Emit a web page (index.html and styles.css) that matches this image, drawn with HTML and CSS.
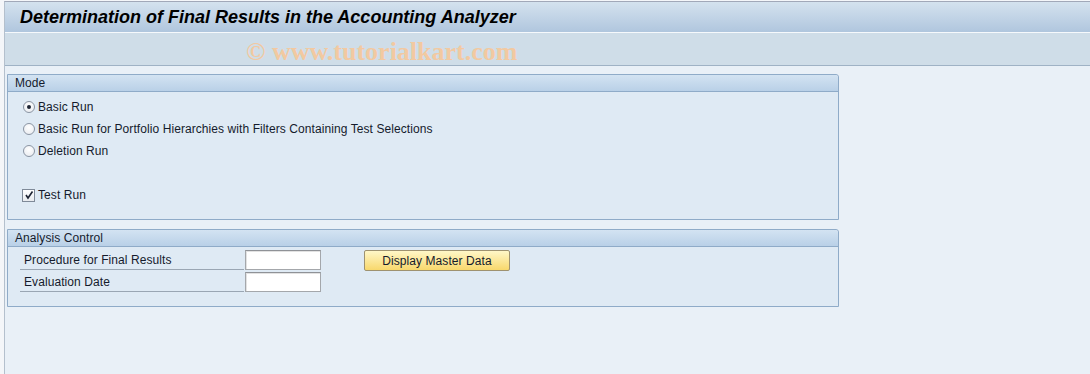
FILE: index.html
```html
<!DOCTYPE html>
<html>
<head>
  <title>Determination of Final Results in the Accounting Analyzer</title>
  <link rel="stylesheet" href="styles.css">
</head>
<body>
  <div class="window">
    <div class="titlebar">
      <h1>Determination of Final Results in the Accounting Analyzer</h1>
    </div>
    <div class="toolbar">
      <span class="watermark">&copy; www.tutorialkart.com</span>
    </div>

    <div class="content">
      <div class="group group-mode">
        <div class="group-head">Mode</div>
        <div class="group-body">
          <div class="row"><span class="radio checked"></span>Basic Run</div>
          <div class="row"><span class="radio"></span>Basic Run for Portfolio Hierarchies with Filters Containing Test Selections</div>
          <div class="row"><span class="radio"></span>Deletion Run</div>
          <div class="row"></div>
          <div class="row"><span class="checkbox"><svg width="10" height="10" viewBox="0 0 10 10"><path d="M2 5 L4 8 L8.5 1.5" fill="none" stroke="#1d2433" stroke-width="1.6"/></svg></span>Test Run</div>
        </div>
      </div>

      <div class="group group-control">
        <div class="group-head">Analysis Control</div>
        <div class="group-body">
          <div class="field">
            <label class="field-label">Procedure for Final Results</label>
            <span class="field-input"></span>
            <button class="btn">Display Master Data</button>
          </div>
          <div class="field">
            <label class="field-label">Evaluation Date</label>
            <span class="field-input"></span>
          </div>
        </div>
      </div>
    </div>
  </div>
</body>
</html>
```

FILE: styles.css
```css
body {
  margin: 0;
  padding: 0 0 0 4px;
  height: 374px;
  background-color: #f4f6f9;
  font-family: "Liberation Sans", Arial, sans-serif;
  font-size: 12px;
  letter-spacing: 0.08px;
  color: #151b2c;
  overflow: hidden;
}
.window {
  height: 372px;
  margin-top: 1px;
  border-top: 1px solid #a1a8b8;
  border-left: 1px solid #b4c0cd;
  background-color: #e9f0f7;
}
.titlebar {
  height: 30px;
  border-bottom: 1px solid #f6f9fc;
  background: linear-gradient(to bottom, #d4e2ee, #b0c6de);
}
h1 {
  margin: 0;
  padding-left: 15px;
  font-size: 18px;
  font-style: italic;
  font-weight: bold;
  letter-spacing: 0;
  line-height: 30px;
  color: #000;
}
.toolbar {
  height: 32px;
  border-bottom: 1px solid #9fb2c5;
  background-color: #cfdde8;
}
.watermark {
  display: inline-block;
  margin-left: 241px;
  font-family: "Liberation Serif", "Times New Roman", serif;
  font-size: 26px;
  font-weight: bold;
  letter-spacing: 0;
  line-height: 38px;
  color: #f2c9a1;
}
.content {
  padding: 8px 0 0 2px;
}
.group {
  width: 830px;
  border: 1px solid #8fabc8;
  border-radius: 0 3px 0 0;
  background-color: #dfeaf4;
}
.group-control {
  margin-top: 9px;
}
.group-head {
  height: 16px;
  padding-left: 7px;
  line-height: 17px;
  border-bottom: 1px solid #8fabc8;
  border-radius: 0 3px 0 0;
  background: linear-gradient(to bottom, #d3e3f2, #b9d0e7);
}
.group-mode .group-body {
  padding: 4px 0 13px 14px;
}
.row {
  display: flex;
  align-items: center;
  height: 22px;
}
.radio {
  box-sizing: border-box;
  width: 12px;
  height: 12px;
  margin-left: 1px;
  margin-right: 3px;
  border: 1px solid #8b95a3;
  border-radius: 50%;
  background: radial-gradient(circle at 50% 35%, #ffffff, #e6e9ee);
  position: relative;
}
.radio.checked::after {
  content: "";
  position: absolute;
  left: 3px;
  top: 3px;
  width: 4px;
  height: 4px;
  border-radius: 50%;
  background-color: #1d2433;
}
.checkbox {
  box-sizing: border-box;
  display: flex;
  align-items: center;
  justify-content: center;
  width: 13px;
  height: 13px;
  margin-right: 3px;
  border: 1px solid #7f8a98;
  background: linear-gradient(to bottom, #ffffff, #e8ebef);
}
.group-control .group-body {
  padding: 1px 0 14px 12px;
}
.field {
  display: flex;
  align-items: flex-end;
  height: 22px;
}
.field-label {
  box-sizing: border-box;
  width: 224px;
  height: 22px;
  padding: 2px 0 0 4px;
  line-height: 20px;
  border-bottom: 1px solid #9aa6b3;
}
.field-input {
  box-sizing: border-box;
  width: 76px;
  height: 20px;
  margin-left: 1px;
  border: 1px solid #a4a7ab;
  border-top-color: #8f9297;
  background-color: #fff;
  box-shadow: inset 1px 1px 0 #e2e2e2;
}
.btn {
  box-sizing: border-box;
  width: 146px;
  height: 21px;
  margin-left: 43px;
  margin-bottom: -1px;
  padding: 0;
  border: 1px solid #9e9270;
  border-radius: 2px;
  background: linear-gradient(to bottom, #fff7c8, #f8d86c);
  font-family: "Liberation Sans", Arial, sans-serif;
  font-size: 12px;
  letter-spacing: 0.08px;
  color: #151b2c;
}
```
